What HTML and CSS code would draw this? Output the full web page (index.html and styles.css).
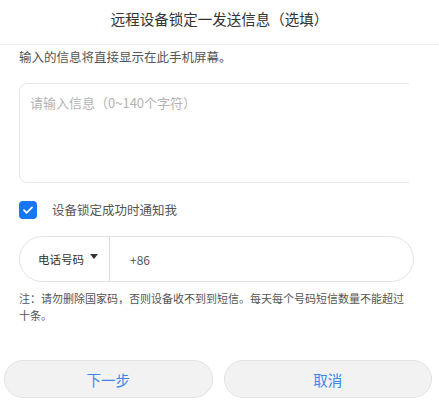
FILE: index.html
```html
<!DOCTYPE html>
<html lang="zh-CN">
<head>
  <meta charset="UTF-8">
  <meta name="viewport" content="width=device-width, initial-scale=1.0">
  <title>远程设备锁定</title>
  <link rel="stylesheet" href="styles.css">
</head>
<body>
  <div class="dialog">
    <div class="dialog-header">远程设备锁定一发送信息（选填）</div>

    <div class="dialog-body">
      <p class="desc">输入的信息将直接显示在此手机屏幕。</p>

      <div class="msg-wrap">
        <textarea class="msg-input" placeholder="请输入信息（0~140个字符）"></textarea>
      </div>

      <label class="notify">
        <span class="check">
          <svg width="12" height="12" viewBox="0 0 12 12"><path d="M2 6.2l2.6 2.6L10 3.4" fill="none" stroke="#fff" stroke-width="1.8" stroke-linecap="round" stroke-linejoin="round"/></svg>
        </span>
        <span>设备锁定成功时通知我</span>
      </label>

      <div class="phone">
        <div class="phone-type">电话号码 <span class="caret"></span></div>
        <div class="phone-num">+86</div>
      </div>

      <p class="note">注：请勿删除国家码，否则设备收不到到短信。每天每个号码短信数量不能超过十条。</p>
    </div>

    <div class="dialog-footer">
      <button class="btn">下一步</button>
      <button class="btn">取消</button>
    </div>
  </div>
</body>
</html>
```

FILE: styles.css
```css
body {
  margin: 0;
  background: #fff;
  font-family: "Noto Sans CJK SC", "Noto Sans", sans-serif;
  color: #333;
}

.dialog {
  width: 439px;
  height: 405px;
  display: flex;
  flex-direction: column;
}

.dialog-header {
  height: 44px;
  line-height: 38px;
  text-align: center;
  font-size: 14.5px;
  color: #333;
  border-bottom: 1px solid #f0f0f0;
}

.dialog-body {
  padding: 0 25px 0 19px;
}

.desc {
  margin: 3px 0 0;
  font-size: 12.5px;
  line-height: 18px;
  color: #555;
}

.msg-wrap {
  width: 390px;
  margin-top: 17px;
  overflow: hidden;
}

.msg-input {
  display: block;
  box-sizing: border-box;
  width: 420px;
  height: 100px;
  padding: 9px 10px;
  border: 1px solid #e6e6e6;
  border-radius: 8px;
  resize: none;
  outline: none;
  font-family: inherit;
  font-size: 13px;
}

.msg-input::placeholder {
  color: #b3b3b3;
}

.notify {
  display: flex;
  align-items: center;
  gap: 15px;
  margin-top: 17px;
  font-size: 12.5px;
  color: #555;
}

.check {
  width: 18px;
  height: 18px;
  border-radius: 4px;
  background: #1677f5;
  display: flex;
  align-items: center;
  justify-content: center;
}

.phone {
  display: flex;
  box-sizing: border-box;
  width: 395px;
  height: 46px;
  margin-top: 17px;
  border: 1px solid #e3e3e3;
  border-radius: 23px;
}

.phone-type {
  width: 90px;
  display: flex;
  align-items: center;
  padding-left: 18px;
  box-sizing: border-box;
  border-right: 1px solid #dcdcdc;
  font-size: 11.5px;
  color: #333;
  gap: 6px;
}

.caret {
  width: 0;
  height: 0;
  border-left: 4px solid transparent;
  border-right: 4px solid transparent;
  border-top: 5px solid #333;
  margin-top: -5px;
}

.phone-num {
  display: flex;
  align-items: center;
  padding-left: 20px;
  font-size: 12px;
  color: #555;
}

.note {
  width: 395px;
  margin: 8px 0 0;
  font-size: 11px;
  line-height: 17px;
  color: #555;
}

.dialog-footer {
  display: flex;
  gap: 11px;
  padding: 0 7px 0 4px;
  margin-top: 36px;
}

.btn {
  flex: 1;
  height: 38px;
  border: 1px solid #e2e2e2;
  border-radius: 19px;
  background: #f2f2f2;
  color: #3a86ef;
  font-family: inherit;
  font-size: 14.5px;
}
```
